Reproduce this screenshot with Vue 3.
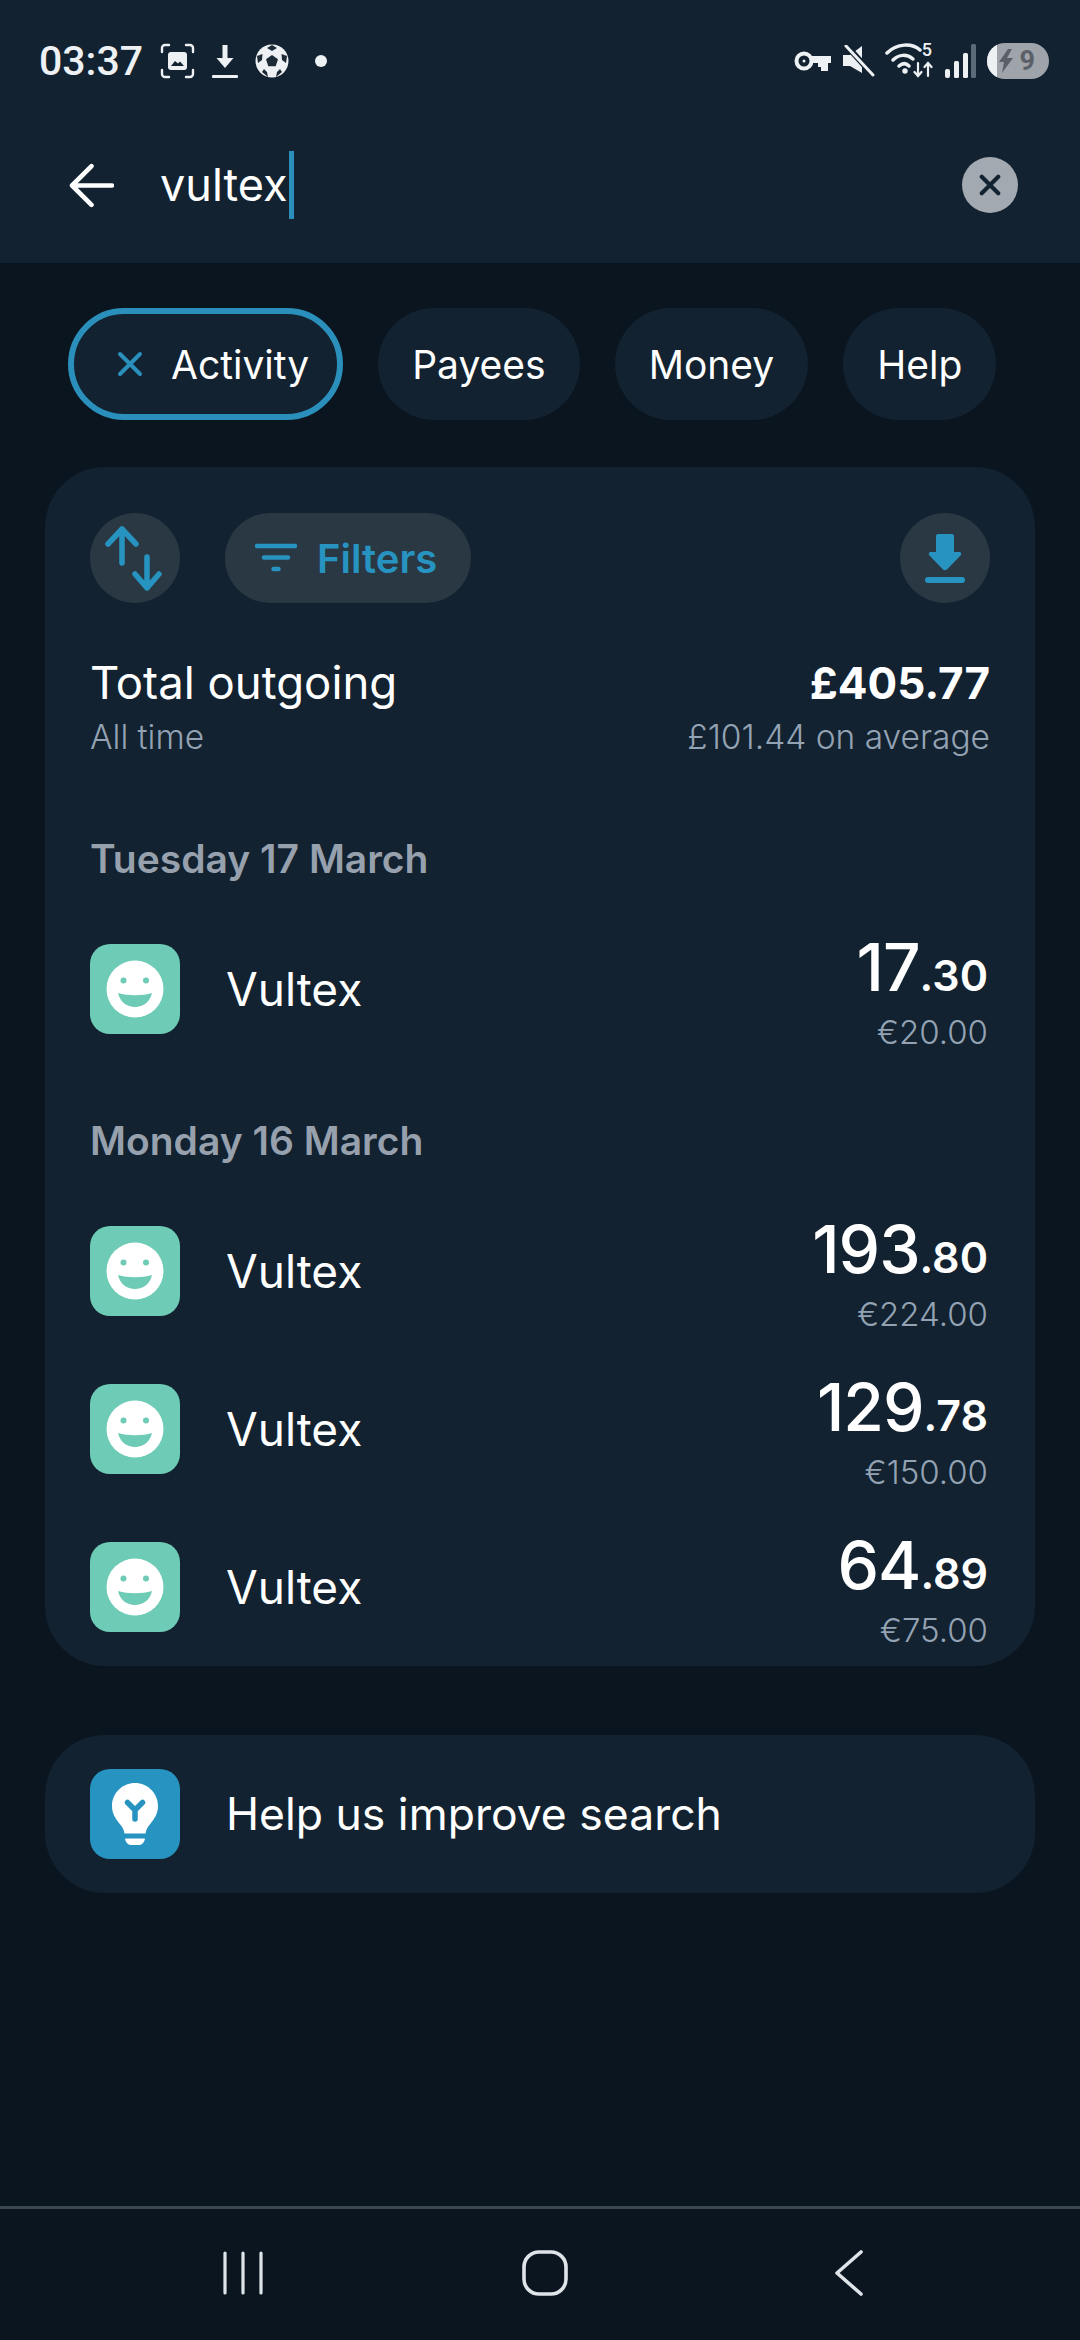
<template>
  <div class="screen">
    <header class="top">
      <div class="status">
        <span class="time">03:37</span>
        <svg class="st-shot" viewBox="0 0 35 36" fill="none" stroke="#eef1f4" stroke-width="2.400" stroke-linecap="round">
          <path d="M2 9V5a3 3 0 0 1 3-3h4M26 2h4a3 3 0 0 1 3 3v4M33 27v4a3 3 0 0 1-3 3h-4M9 34H5a3 3 0 0 1-3-3v-4" />
          <rect x="8" y="9" width="19" height="18" rx="3" fill="#eef1f4" stroke="none" />
          <path d="M11 23l4-5 3 2.500 2-2 4 4.500z" fill="#122230" stroke="none" />
        </svg>
        <svg class="st-down" viewBox="0 0 26 35" fill="#eef1f4">
          <path d="M10.500 1h5v13h6L13 24 4.500 14h6z" />
          <rect x="0" y="31" width="26" height="3" rx="1" />
        </svg>
        <svg class="st-ball" viewBox="0 0 34 34">
          <circle cx="17" cy="17" r="16.500" fill="#eef1f4" />
          <path d="M17 11l6 4.300-2.300 7h-7.400l-2.300-7zM17 1l-5 3 5 3 5-3zM2 12l1 7 4-3 .500-6zM32 12l-1 7-4-3-.500-6zM7 28l6 5-1-5-3-3zM27 28l-6 5 1-5 3-3z" fill="#1c2a36" />
        </svg>
        <i class="st-dot"></i>
        <span class="st-gap"></span>
        <svg class="st-key" viewBox="0 0 37 22" fill="none">
          <circle cx="10" cy="11" r="7.500" stroke="#eef1f4" stroke-width="4" />
          <circle cx="10" cy="11" r="1.500" fill="#eef1f4" />
          <path d="M16 6h21v7h-3v8h-7v-4h-3v-4H16z" fill="#eef1f4" />
        </svg>
        <svg class="st-mute" viewBox="0 0 32 32">
          <path d="M0 10h7L19 1v27L7 21H0z" fill="#eef1f4" />
          <path d="M3 0l27 30" stroke="#122230" stroke-width="6" />
          <path d="M3 1l27 29" stroke="#eef1f4" stroke-width="3" stroke-linecap="round" />
        </svg>
        <div class="st-wifi">
          <svg viewBox="0 0 48 36" fill="none" stroke="#eef1f4" stroke-linecap="round">
            <path d="M2 10C12 0 27 0 35 7" stroke-width="3.500" />
            <path d="M8 17c6-6 14-6 20-1" stroke-width="3.500" />
            <path d="M14 23c3.500-3 7-3 10 0" stroke-width="3.500" />
            <circle cx="20" cy="28" r="2.700" fill="#eef1f4" stroke="none" />
            <path d="M33 20v13M29.500 29l3.500 4 3.500-4M43 33V20M39.500 24l3.500-4 3.500 4" stroke-width="2.200" />
          </svg>
          <span class="wifi-5">5</span>
        </div>
        <svg class="st-signal" viewBox="0 0 31 34">
          <rect x="0" y="25" width="5" height="9" rx="2" fill="#eef1f4" />
          <rect x="9" y="17" width="5" height="17" rx="1.500" fill="#eef1f4" />
          <rect x="18" y="9" width="5" height="25" rx="1.500" fill="#eef1f4" />
          <rect x="26" y="0" width="5" height="34" rx="1.500" fill="#5c6b78" />
        </svg>
        <div class="st-batt">
          <i class="batt-fill"></i>
          <svg class="batt-bolt" viewBox="0 0 16 24"><path d="M10 0L1 13h5l-2 11 11-15H9l5-9z" fill="#5b6068" /></svg>
          <span>9</span>
        </div>
      </div>
      <div class="search">
        <svg class="back" viewBox="0 0 44 44" fill="none" stroke="#fff" stroke-width="4.500" stroke-linecap="round" stroke-linejoin="round">
          <path d="M42 22H3M22 3L3 22l19 19" />
        </svg>
        <div class="query">vultex<i class="caret"></i></div>
        <button class="clear">
          <svg viewBox="0 0 24 24" fill="none" stroke="#122230" stroke-width="4.500" stroke-linecap="round"><path d="M3 3l18 18M21 3L3 21" /></svg>
        </button>
      </div>
    </header>

    <main class="content">
      <div class="chips">
        <div class="chip chip-active">
          <svg viewBox="0 0 26 26" fill="none" stroke="#2b8fbb" stroke-width="4" stroke-linecap="round"><path d="M3 3l20 20M23 3L3 23" /></svg>
          Activity
        </div>
        <div v-for="c in chips" :key="c" class="chip">{{ c }}</div>
      </div>

      <section class="card">
        <div class="tools">
          <button class="round">
            <svg viewBox="0 0 90 90" fill="none" stroke="#2793c0" stroke-width="5.500" stroke-linecap="round" stroke-linejoin="round">
              <path d="M32 50V16M18 31L32 16l14 15M57 44v31M45 61l12 14 12-14" />
            </svg>
          </button>
          <button class="filters">
            <svg viewBox="0 0 42 30" fill="none" stroke="#2793c0" stroke-width="4.500" stroke-linecap="round">
              <path d="M2 3h38M9 14.500h24M18.500 26h5" />
            </svg>
            Filters
          </button>
          <button class="round round-end">
            <svg viewBox="0 0 40 49" fill="#2793c0">
              <path d="M11 2a2 2 0 0 1 2-2h14a2 2 0 0 1 2 2v16h5c2 0 3 2 1.500 3.500L22 35.500a3.500 3.500 0 0 1-4 0L4.500 21.500C3 20 4 18 6 18h5z" />
              <rect x="0" y="43" width="40" height="6" rx="3" />
            </svg>
          </button>
        </div>

        <div class="total">
          <div>
            <div class="total-title">Total outgoing</div>
            <div class="total-sub">All time</div>
          </div>
          <div class="total-right">
            <div class="total-sum">£405.77</div>
            <div class="total-sub">£101.44 on average</div>
          </div>
        </div>

        <template v-for="group in groups" :key="group.date">
          <h3 class="date">{{ group.date }}</h3>
          <div v-for="(tx, i) in group.items" :key="i" class="tx">
            <div class="merchant">
              <svg viewBox="0 0 90 90">
                <circle cx="45" cy="45" r="28.500" fill="#fff" />
                <circle cx="33.500" cy="36.500" r="3" fill="#6ecbb5" />
                <circle cx="56" cy="36.500" r="3" fill="#6ecbb5" />
                <path d="M28 49c10 3 24 3 34 0-2 9-9 14-17 14s-15-5-17-14z" fill="#6ecbb5" />
              </svg>
            </div>
            <span class="tx-name">Vultex</span>
            <div class="tx-right">
              <div class="amount"><span class="whole">{{ tx.whole }}</span><span class="pence">.{{ tx.pence }}</span></div>
              <div class="euro">{{ tx.euro }}</div>
            </div>
          </div>
        </template>
      </section>

      <section class="help">
        <div class="bulb">
          <svg viewBox="0 0 90 90">
            <path d="M45 14c-12.600 0-23 10-23 23 0 7.500 3.500 12.500 7 17 2.500 3.200 5 6 5.500 10.500h21c.5-4.500 3-7.300 5.500-10.500 3.500-4.500 7-9.500 7-17 0-13-10.400-23-23-23z" fill="#fff" />
            <path d="M37 69.500h17c.8 0 1 .6.8 1.200-.8 3-3 5.300-6 5.300h-7.600c-3 0-5.200-2.300-6-5.300-.2-.6 0-1.200.8-1.200z" fill="#fff" />
            <path d="M37.500 33.500L45 41l7.500-7.500M45 41v9" fill="none" stroke="#2793c0" stroke-width="5.500" stroke-linecap="round" stroke-linejoin="round" />
          </svg>
        </div>
        <span class="help-text">Help us improve search</span>
      </section>
    </main>

    <nav class="nav">
      <svg class="nav-recent" viewBox="0 0 40 44" stroke="#dfe4e9" stroke-width="3.200" stroke-linecap="round"><path d="M2 2v40M20 2v40M38 2v40" /></svg>
      <svg class="nav-home" viewBox="0 0 46 46" fill="none" stroke="#dfe4e9" stroke-width="3.600"><rect x="2" y="2" width="42" height="42" rx="15" /></svg>
      <svg class="nav-back" viewBox="0 0 30 46" fill="none" stroke="#dfe4e9" stroke-width="3.600" stroke-linecap="round" stroke-linejoin="round"><path d="M27 2L3 23l24 21" /></svg>
    </nav>
  </div>
</template>

<script setup>
const chips = ['Payees', 'Money', 'Help']

const groups = [
  {
    date: 'Tuesday 17 March',
    items: [{ whole: '17', pence: '30', euro: '€20.00' }]
  },
  {
    date: 'Monday 16 March',
    items: [
      { whole: '193', pence: '80', euro: '€224.00' },
      { whole: '129', pence: '78', euro: '€150.00' },
      { whole: '64', pence: '89', euro: '€75.00' }
    ]
  }
]
</script>

<style>
html, body { margin: 0; background: #0a1520; }
</style>

<style scoped>
.screen {
  width: 1080px;
  height: 2340px;
  display: flex;
  flex-direction: column;
  background: #0a1520;
  color: #fff;
  font-family: Inter, "Noto Sans", sans-serif;
  overflow: hidden;
}

.top {
  height: 263px;
  flex: none;
  background: #122230;
}

.status {
  height: 122px;
  display: flex;
  align-items: center;
  padding: 0 31px 0 39px;
  box-sizing: border-box;
}

.time {
  font-family: Roboto, sans-serif;
  font-size: 41px;
  font-weight: 500;
  color: #eef1f4;
  width: 121px;
}

.st-shot { width: 35px; height: 36px; }
.st-down { width: 26px; height: 35px; margin-left: 17px; }
.st-ball { width: 34px; height: 34px; margin-left: 17px; }
.st-dot { width: 12px; height: 12px; border-radius: 50%; background: #eef1f4; margin-left: 26px; }
.st-gap { flex: 1; }
.st-key { width: 37px; height: 22px; }
.st-mute { width: 32px; height: 32px; margin-left: 12px; }

.st-wifi {
  position: relative;
  width: 48px;
  height: 36px;
  margin-left: 10px;
}

.st-wifi svg { display: block; width: 48px; height: 36px; }

.wifi-5 {
  position: absolute;
  right: 1px;
  top: -2px;
  font-family: Roboto, sans-serif;
  font-size: 18px;
  line-height: 18px;
  font-weight: 500;
  color: #eef1f4;
}

.st-signal { width: 31px; height: 34px; margin-left: 12px; }

.st-batt {
  position: relative;
  width: 62px;
  height: 36px;
  margin-left: 11px;
  border-radius: 18px;
  background: #9fa4ab;
  overflow: hidden;
  display: flex;
  align-items: center;
  justify-content: flex-end;
  padding-right: 14px;
  box-sizing: border-box;
  font-family: Roboto, sans-serif;
  font-size: 27px;
  font-weight: 700;
  color: #5b6068;
}

.batt-fill {
  position: absolute;
  left: 0;
  top: 0;
  bottom: 0;
  width: 10px;
  background: #eef1f4;
}

.batt-bolt {
  position: absolute;
  left: 11px;
  top: 6px;
  width: 16px;
  height: 24px;
}

.search {
  height: 126px;
  display: flex;
  align-items: center;
  padding: 0 62px 0 69px;
}

.back { width: 45px; height: 45px; flex: none; }

.query {
  flex: 1;
  display: flex;
  align-items: center;
  margin-left: 46px;
  font-size: 45px;
  line-height: 68px;
}

.caret {
  width: 5px;
  height: 68px;
  background: #2b8fbb;
  margin-left: 1px;
}

.clear {
  width: 56px;
  height: 56px;
  border: 0;
  padding: 0;
  border-radius: 50%;
  background: #a3a9b1;
  display: flex;
  align-items: center;
  justify-content: center;
}

.clear svg { width: 22px; height: 22px; }

.content {
  flex: 1;
  padding: 45px 45px 0;
}

.chips {
  display: flex;
  gap: 35px;
  padding-left: 23px;
}

.chip {
  height: 112px;
  padding: 0 34px;
  box-sizing: border-box;
  border-radius: 56px;
  background: #122230;
  display: flex;
  align-items: center;
  gap: 28px;
  font-size: 39px;
}

.chip-active {
  border: 6px solid #2b8fbb;
  padding: 0 28px 0 43px;
}

.chip-active svg { width: 26px; height: 26px; }

.card {
  margin-top: 47px;
  padding: 46px 45px 0;
  border-radius: 60px;
  background: #122230;
}

.tools {
  display: flex;
  align-items: center;
  gap: 45px;
}

.round {
  width: 90px;
  height: 90px;
  padding: 0;
  border: 0;
  border-radius: 50%;
  background: #2a3843;
  display: flex;
  align-items: center;
  justify-content: center;
}

.round svg { width: 90px; height: 90px; }
.round-end { margin-left: auto; }
.round-end svg { width: 40px; height: 49px; }

.filters {
  height: 90px;
  padding: 0 34px 0 30px;
  border: 0;
  border-radius: 45px;
  background: #2a3843;
  display: flex;
  align-items: center;
  gap: 20px;
  color: #2793c0;
  font-family: inherit;
  font-size: 40px;
  font-weight: 600;
}

.filters svg { width: 42px; height: 30px; }

.total {
  display: flex;
  justify-content: space-between;
  margin-top: 52px;
  padding-bottom: 29px;
}

.total-title {
  font-size: 45.5px;
  line-height: 56px;
}

.total-sum {
  font-size: 44px;
  line-height: 56px;
  font-weight: 700;
}

.total-right { text-align: right; }

.total-sub {
  margin-top: 6px;
  font-size: 33.500px;
  line-height: 40px;
  font-weight: 300;
  color: #94a3b3;
}

.date {
  margin: 50px 0 28px;
  font-size: 39px;
  line-height: 46px;
  font-weight: 600;
  color: #97a0ad;
}

.tx {
  height: 158px;
  display: flex;
  align-items: center;
}

.merchant {
  width: 90px;
  height: 90px;
  flex: none;
  border-radius: 20px;
  background: #6ecbb5;
}

.merchant svg { display: block; width: 90px; height: 90px; }

.tx-name {
  flex: 1;
  margin-left: 46px;
  font-size: 46px;
}

.tx-right {
  text-align: right;
  margin: 15px 2px 0 0;
}

.amount {
  line-height: 53px;
}

.whole {
  font-size: 66px;
  font-weight: 500;
  letter-spacing: -1px;
}

.pence {
  font-size: 43px;
  font-weight: 600;
}

.euro {
  font-size: 33px;
  line-height: 40px;
  font-weight: 300;
  color: #94a3b3;
}

.help {
  margin-top: 69px;
  height: 158px;
  padding: 0 45px;
  border-radius: 60px;
  background: #122230;
  display: flex;
  align-items: center;
}

.bulb {
  width: 90px;
  height: 90px;
  border-radius: 20px;
  background: #2793c0;
}

.bulb svg { display: block; width: 90px; height: 90px; }

.help-text {
  margin-left: 46px;
  font-size: 44.500px;
}

.nav {
  height: 134px;
  flex: none;
  box-sizing: border-box;
  border-top: 3px solid #3a4753;
  background: #0a1520;
  display: flex;
  align-items: center;
  padding: 0 0 3px 223px;
}

.nav-recent { width: 40px; height: 44px; }
.nav-home { width: 46px; height: 46px; margin-left: 259px; }
.nav-back { width: 30px; height: 46px; margin-left: 266px; }
</style>
